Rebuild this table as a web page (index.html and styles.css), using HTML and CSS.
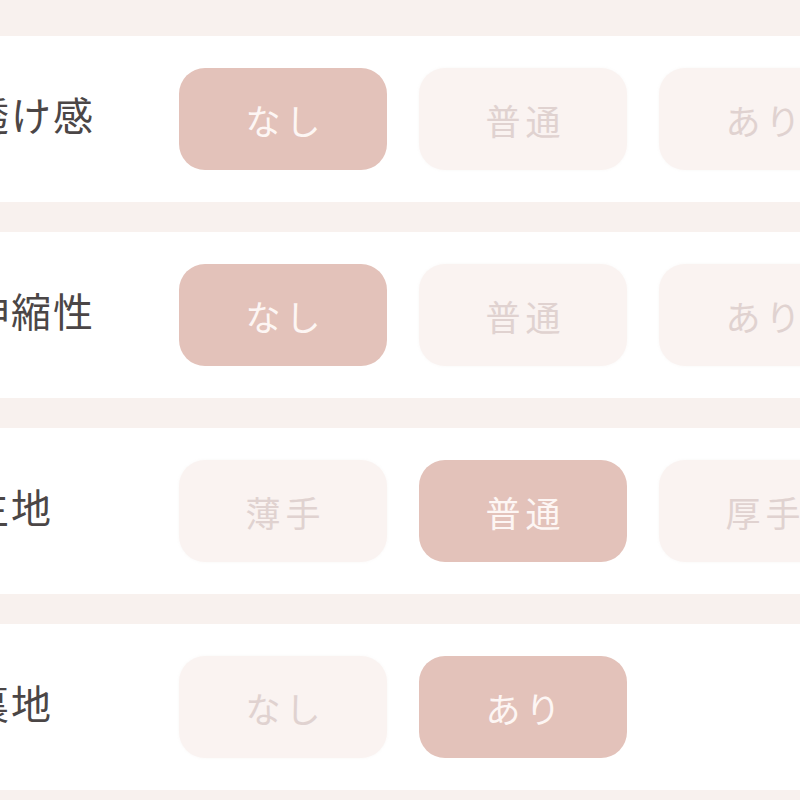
FILE: index.html
```html
<!DOCTYPE html>
<html lang="ja">
<head>
<meta charset="utf-8">
<link rel="stylesheet" href="styles.css">
</head>
<body>
<div class="list">
  <div class="row">
    <div class="label">透け感</div>
    <div class="options">
      <div class="opt on">なし</div>
      <div class="opt">普通</div>
      <div class="opt">あり</div>
    </div>
  </div>
  <div class="row">
    <div class="label">伸縮性</div>
    <div class="options">
      <div class="opt on">なし</div>
      <div class="opt">普通</div>
      <div class="opt">あり</div>
    </div>
  </div>
  <div class="row">
    <div class="label">生地</div>
    <div class="options">
      <div class="opt">薄手</div>
      <div class="opt on">普通</div>
      <div class="opt">厚手</div>
    </div>
  </div>
  <div class="row">
    <div class="label">裏地</div>
    <div class="options">
      <div class="opt">なし</div>
      <div class="opt on">あり</div>
    </div>
  </div>
</div>
</body>
</html>
```

FILE: styles.css
```css
html, body {
  margin: 0;
  padding: 0;
}
body {
  background: #f8f1ee;
  font-family: "Noto Sans CJK JP", "Noto Sans", sans-serif;
  width: 800px;
  height: 800px;
  overflow: hidden;
}
.list {
  display: flex;
  flex-direction: column;
  gap: 30px;
  padding-top: 36px;
}
.row {
  background: #ffffff;
  height: 166px;
  display: flex;
  align-items: center;
  overflow: hidden;
}
.label {
  flex: 0 0 210px;
  margin-left: -31px;
  font-size: 40px;
  letter-spacing: 2px;
  color: #4b4646;
  padding-bottom: 11px;
  white-space: nowrap;
}
.options {
  display: flex;
  gap: 32px;
}
.opt {
  flex: 0 0 208px;
  height: 102px;
  border-radius: 26px;
  background: #faf3f1;
  color: #e0d2d0;
  font-size: 35px;
  letter-spacing: 5px;
  text-indent: 5px;
  display: flex;
  align-items: center;
  justify-content: center;
  box-shadow: 0 0 3px rgba(180, 150, 140, 0.08);
}
.opt.on {
  background: #e3c2ba;
  color: #fdf6f4;
  box-shadow: none;
}
```
